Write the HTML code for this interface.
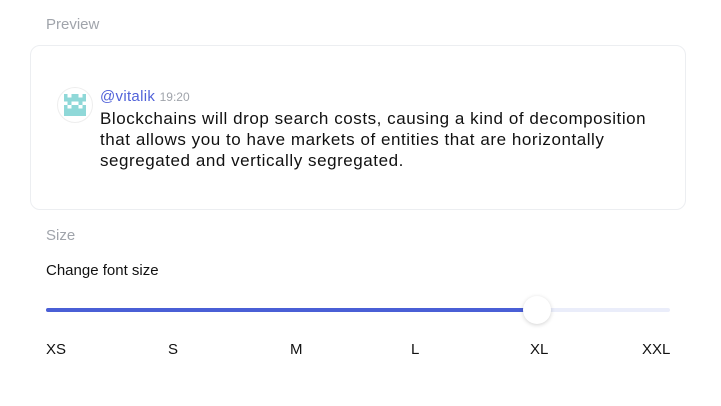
<!DOCTYPE html>
<html><head><style>
body{margin:0;width:721px;height:406px;background:#fff;font-family:"Liberation Sans",sans-serif;position:relative;overflow:hidden}
.a{position:absolute}
.lbl{color:#a0a4ab;font-size:15px}
.card{left:30px;top:45px;width:654px;height:163px;border:1px solid #eceef1;border-radius:10px}
.t{font-size:17px;color:#111;line-height:21px;letter-spacing:0.55px;white-space:nowrap}
.lab{top:341px;font-size:15px;color:#111}
</style></head><body>
<div class="a lbl" style="left:46px;top:16px">Preview</div>
<div class="a card"></div>
<div class="a" style="left:57px;top:87px;width:34px;height:34px;border:1px solid #eee;border-radius:50%;background:#fff"></div>
<svg class="a" style="left:63px;top:94px" width="24" height="22" viewBox="0 0 6 6" shape-rendering="crispEdges">
<g fill="#8fd8d8"><rect x="0" y="0" width="1" height="1"/><rect x="2" y="0" width="2" height="1"/><rect x="5" y="0" width="1" height="1"/>
<rect x="0" y="1" width="6" height="1"/><rect x="1" y="2" width="1" height="1"/><rect x="4" y="2" width="1" height="1"/><rect x="0" y="3" width="1" height="1"/><rect x="2" y="3" width="2" height="1"/><rect x="5" y="3" width="1" height="1"/><rect x="0" y="4" width="6" height="2"/></g></svg>
<div class="a" style="left:100px;top:88px;font-size:15px;color:#5162d9;letter-spacing:0.3px">@vitalik <span style="font-size:12px;color:#a0a4ab;letter-spacing:0">19:20</span></div>
<div class="a t" style="left:100px;top:108px">Blockchains will drop search costs, causing a kind of decomposition<br>that allows you to have markets of entities that are horizontally<br>segregated and vertically segregated.</div>
<div class="a lbl" style="left:46px;top:227px">Size</div>
<div class="a" style="left:46px;top:262px;font-size:15px;color:#111">Change font size</div>
<div class="a" style="left:46px;top:308px;width:624px;height:4px;border-radius:2px;background:#eaedfa"></div>
<div class="a" style="left:46px;top:308px;width:491px;height:4px;border-radius:2px;background:#4a5fd6"></div>
<div class="a" style="left:523px;top:296px;width:28px;height:28px;border-radius:50%;background:#fff;box-shadow:0 1px 4px rgba(0,0,0,.18)"></div>
<div class="a lab" style="left:46px">XS</div>
<div class="a lab" style="left:168px">S</div>
<div class="a lab" style="left:290px">M</div>
<div class="a lab" style="left:411px">L</div>
<div class="a lab" style="left:530px">XL</div>
<div class="a lab" style="left:642px">XXL</div>
</body></html>
